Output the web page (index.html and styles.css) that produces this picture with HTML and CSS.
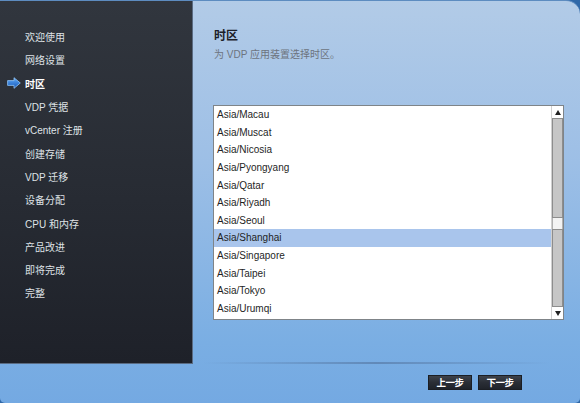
FILE: index.html
```html
<!DOCTYPE html>
<html lang="zh-CN">
<head>
<meta charset="utf-8">
<title>时区</title>
<link rel="stylesheet" href="styles.css">
</head>
<body>
<div class="window">
  <div class="main">
    <nav class="sidebar">
      <div class="step"><span class="slot"></span>欢迎使用</div>
      <div class="step"><span class="slot"></span>网络设置</div>
      <div class="step active"><span class="slot"><svg width="14" height="12" viewBox="0 0 14 12"><defs><linearGradient id="ag" x1="0" y1="0" x2="0" y2="1"><stop offset="0" stop-color="#5eaaf8"/><stop offset="1" stop-color="#1657b8"/></linearGradient></defs><path d="M0.6 3.6 H7 V0.7 L13.3 6 L7 11.3 V8.4 H0.6 Z" fill="url(#ag)" stroke="#8fc4f8" stroke-width="0.8" stroke-linejoin="round"/></svg></span>时区</div>
      <div class="step"><span class="slot"></span>VDP 凭据</div>
      <div class="step"><span class="slot"></span>vCenter 注册</div>
      <div class="step"><span class="slot"></span>创建存储</div>
      <div class="step"><span class="slot"></span>VDP 迁移</div>
      <div class="step"><span class="slot"></span>设备分配</div>
      <div class="step"><span class="slot"></span>CPU 和内存</div>
      <div class="step"><span class="slot"></span>产品改进</div>
      <div class="step"><span class="slot"></span>即将完成</div>
      <div class="step"><span class="slot"></span>完整</div>
    </nav>
    <section class="content">
      <h1 class="title">时区</h1>
      <p class="subtitle">为 VDP 应用装置选择时区。</p>
      <div class="listbox">
        <ul class="items">
          <li>Asia/Macau</li>
          <li>Asia/Muscat</li>
          <li>Asia/Nicosia</li>
          <li>Asia/Pyongyang</li>
          <li>Asia/Qatar</li>
          <li>Asia/Riyadh</li>
          <li>Asia/Seoul</li>
          <li class="selected">Asia/Shanghai</li>
          <li>Asia/Singapore</li>
          <li>Asia/Taipei</li>
          <li>Asia/Tokyo</li>
          <li>Asia/Urumqi</li>
        </ul>
        <div class="scrollbar">
          <div class="sb-btn"><svg width="6" height="5" viewBox="0 0 6 5"><path d="M3 0 L6 5 H0 Z" fill="#222"/></svg></div>
          <div class="sb-track"></div>
          <div class="sb-thumb"></div>
          <div class="sb-track lower"></div>
          <div class="sb-btn"><svg width="6" height="5" viewBox="0 0 6 5"><path d="M0 0 H6 L3 5 Z" fill="#222"/></svg></div>
        </div>
      </div>
      <div class="spacer"></div>
      <div class="separator"></div>
    </section>
  </div>
  <footer class="footer">
    <button class="btn">上一步</button>
    <button class="btn">下一步</button>
  </footer>
</div>
</body>
</html>
```

FILE: styles.css
```css
* { box-sizing: border-box; }
html, body { margin: 0; padding: 0; }
body {
  width: 580px;
  height: 403px;
  background: #2f68a8;
  font-family: "Liberation Sans", "Noto Sans CJK SC", Arial, sans-serif;
  overflow: hidden;
}
.window {
  width: 580px;
  height: 403px;
  display: flex;
  flex-direction: column;
  background: linear-gradient(to bottom, #b2cbe7 0%, #9dbfe6 40%, #7aaee3 85%, #74a9e2 100%);
  border-top: 1px solid #5d8cc0;
  border-radius: 0 14px 5px 5px;
  overflow: hidden;
}
.main {
  display: flex;
  height: 363px;
}
.sidebar {
  width: 193px;
  flex: none;
  background: linear-gradient(to bottom, #31363e 0%, #272b33 55%, #1e2129 100%);
  border-right: 1px solid #5a6b82;
  border-bottom: 1px solid #5a6b82;
  padding-top: 24px;
  display: flex;
  flex-direction: column;
}
.step {
  height: 23.3px;
  display: flex;
  align-items: center;
  padding-left: 7px;
  font-size: 10px;
  color: #dfe2e6;
}
.step .slot {
  width: 18px;
  flex: none;
  display: flex;
  align-items: center;
}
.step.active {
  color: #ffffff;
  font-weight: bold;
}
.content {
  flex: 1;
  display: flex;
  flex-direction: column;
  padding-left: 20px;
}
.title {
  margin: 27px 0 0 1px;
  font-size: 12px;
  line-height: 16px;
  font-weight: bold;
  color: #1c2028;
}
.subtitle {
  margin: 4px 0 0 1px;
  font-size: 10px;
  line-height: 14px;
  color: #6d747e;
}
.listbox {
  margin-top: 43px;
  width: 351px;
  height: 215px;
  background: #ffffff;
  border: 1px solid #7f8488;
  display: flex;
}
.items {
  list-style: none;
  margin: 0;
  padding: 0;
  flex: 1;
  display: grid;
  grid-auto-rows: 17.6px;
  align-content: start;
}
.items li {
  font-size: 10px;
  color: #1f1f1f;
  padding-left: 3px;
  display: flex;
  align-items: center;
}
.items li.selected {
  background: #a9c5ec;
}
.scrollbar {
  width: 12px;
  flex: none;
  display: flex;
  flex-direction: column;
  border-left: 1px solid #d0d0d0;
}
.sb-btn {
  height: 12px;
  flex: none;
  background: #ffffff;
  display: flex;
  align-items: center;
  justify-content: center;
}
.sb-track {
  height: 100px;
  flex: none;
  background: #c6c6c6;
  border: 1px solid #8d8d8d;
}
.sb-track.lower {
  flex: 1;
  height: auto;
}
.sb-thumb {
  height: 11px;
  flex: none;
  background: #f3f3f3;
  border-left: 1px solid #b0b0b0;
  border-right: 1px solid #b0b0b0;
}
.spacer { flex: 1; }
.separator {
  height: 2px;
  margin: 0 30px 0 -10px;
  background: linear-gradient(to right, rgba(80,120,170,0) 0%, #6189b8 50%, rgba(80,120,170,0) 100%);
}
.footer {
  flex: 1;
  display: flex;
  justify-content: flex-end;
  align-items: flex-start;
  gap: 6px;
  padding: 11px 58px 0 0;
}
.btn {
  width: 44px;
  height: 15px;
  padding: 0;
  border: 1px solid #1b1e24;
  background: linear-gradient(to bottom, #3d424b 0%, #2a2e36 50%, #1f232a 100%);
  color: #ffffff;
  font-family: "Noto Sans CJK SC", sans-serif;
  font-size: 9.5px;
  font-weight: bold;
  line-height: 13px;
  letter-spacing: -0.5px;
}
```
